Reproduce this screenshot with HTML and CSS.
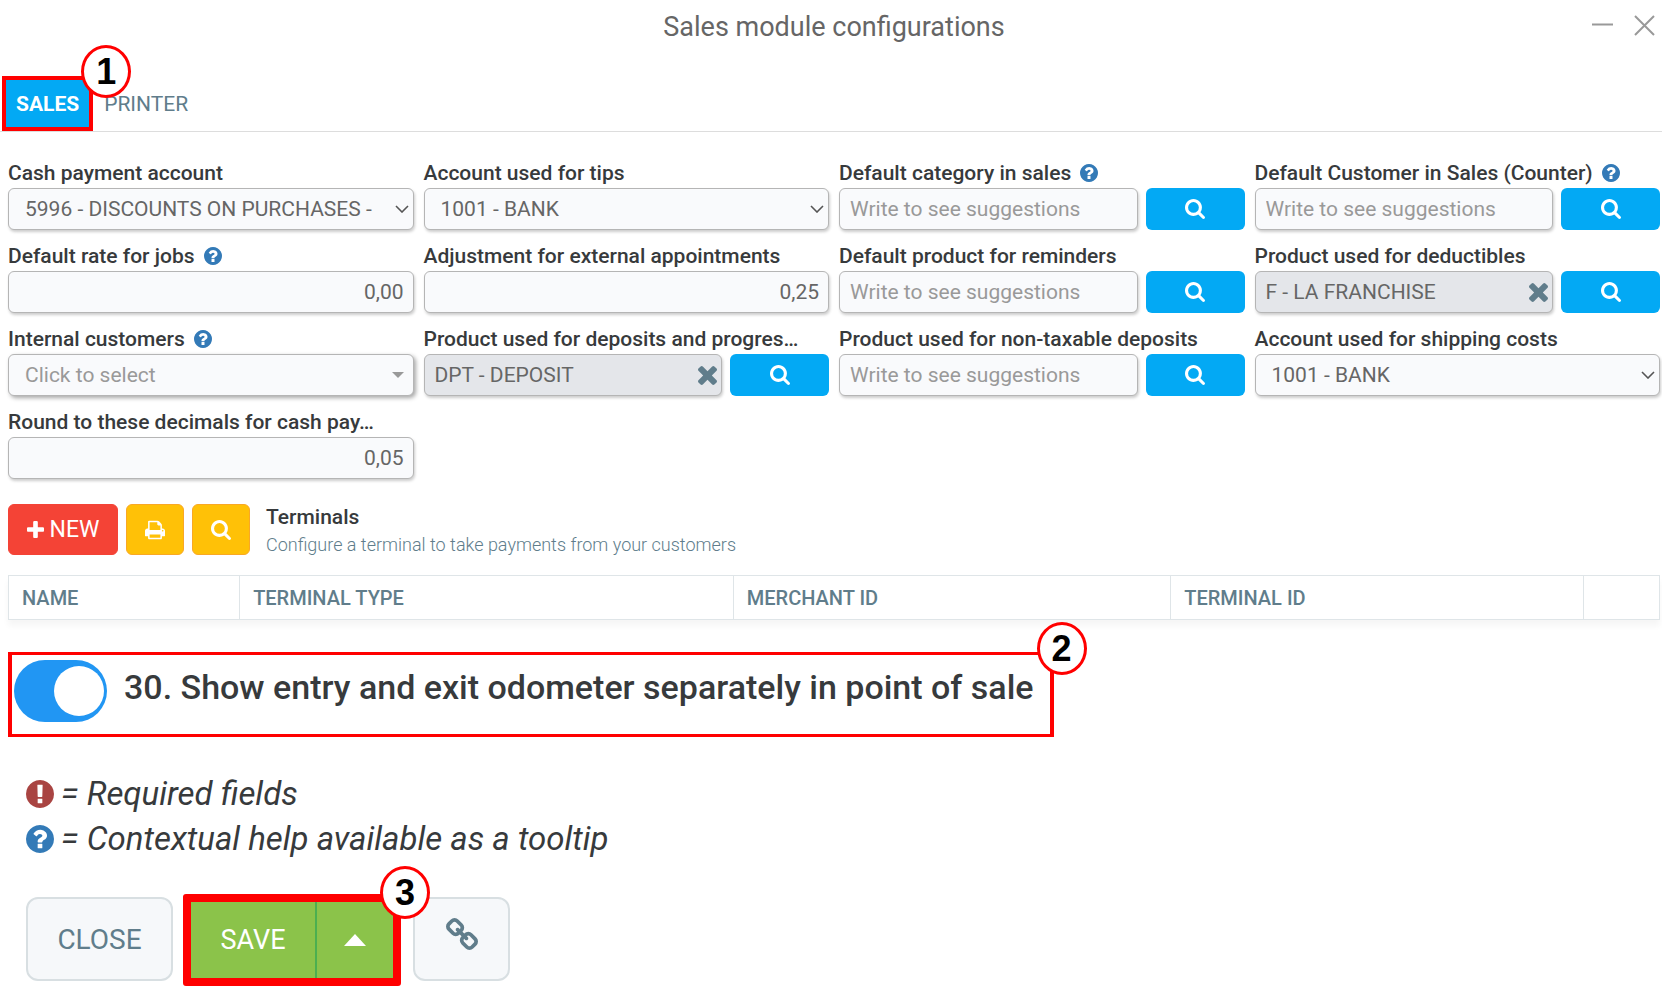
FILE: index.html
```
<!DOCTYPE html>
<html lang="en">
	<head>
		<meta charset="utf-8">
		<title>Sales module configurations</title>
		<link rel="stylesheet" href="styles.css">
	</head>
	<body>
		<!-- icons -->
		<svg class="sprite" aria-hidden="true">
			<symbol id="i-search" viewBox="0 0 1664 1664"><path d="M1152 704q0-185-131.5-316.5t-316.5-131.5-316.5 131.5-131.5 316.5 131.5 316.5 316.5 131.5 316.5-131.5 131.5-316.5zm512 832q0 52-38 90t-90 38q-54 0-90-38l-343-342q-179 124-399 124-143 0-273.5-55.5t-225-150-150-225-55.5-273.5 55.5-273.5 150-225 225-150 273.5-55.5 273.5 55.5 225 150 150 225 55.5 273.5q0 220-124 399l343 343q37 37 37 90z"/></symbol>
			<symbol id="i-help" viewBox="128 128 1536 1536"><path d="M1024 1376v-192q0-14-9-23t-23-9h-192q-14 0-23 9t-9 23v192q0 14 9 23t23 9h192q14 0 23-9t9-23zm256-672q0-88-55.5-163t-138.5-116-170-41q-243 0-371 213-15 24 8 42l132 100q7 6 19 6 16 0 25-12 53-68 86-92 34-24 86-24 48 0 85.5 26t37.5 59q0 38-20 61t-68 45q-63 28-115.5 86.5t-52.5 125.5v36q0 14 9 23t23 9h192q14 0 23-9t9-23q0-19 21.5-49.5t54.5-49.5q32-18 49-28.5t46-35 44.5-48 28-60.5 12.5-81zm384 192q0 209-103 385.5t-279.5 279.5-385.5 103-385.5-103-279.5-279.5-103-385.5 103-385.5 279.5-279.5 385.5-103 385.5 103 279.5 279.5 103 385.5z"/></symbol>
			<symbol id="i-required" viewBox="128 128 1536 1536"><path d="M896 128q209 0 385.5 103t279.5 279.5 103 385.5-103 385.5-279.5 279.5-385.5 103-385.5-103-279.5-279.5-103-385.5 103-385.5 279.5-279.5 385.5-103zm128 1247v-190q0-14-9-23.5t-22-9.5h-192q-13 0-23 10t-10 23v190q0 13 10 23t23 10h192q13 0 22-9.5t9-23.5zm-2-344l18-621q0-12-10-18-10-8-24-8h-220q-14 0-24 8-10 6-10 18l17 621q0 10 10 17.5t24 7.5h185q14 0 23.5-7.5t10.5-17.5z"/></symbol>
			<symbol id="i-times" viewBox="302 366 1188 1188"><path d="M1490 1322q0 40-28 68l-136 136q-28 28-68 28t-68-28l-294-294-294 294q-28 28-68 28t-68-28l-136-136q-28-28-28-68t28-68l294-294-294-294q-28-28-28-68t28-68l136-136q28-28 68-28t68 28l294 294 294-294q28-28 68-28t68 28l136 136q28 28 28 68t-28 68l-294 294 294 294q28 28 28 68z"/></symbol>
			<symbol id="i-plus" viewBox="192 128 1408 1408"><path d="M1600 736v192q0 40-28 68t-68 28h-416v416q0 40-28 68t-68 28h-192q-40 0-68-28t-28-68v-416h-416q-40 0-68-28t-28-68v-192q0-40 28-68t68-28h416v-416q0-40 28-68t68-28h192q40 0 68 28t28 68v416h416q40 0 68 28t28 68z"/></symbol>
			<symbol id="i-print" viewBox="64 64 1664 1664"><path d="M448 1536h896v-256h-896v256zm0-640h896v-384h-160q-40 0-68-28t-28-68v-160h-640v640zm1152 64q0-26-19-45t-45-19-45 19-19 45 19 45 45 19 45-19 19-45zm128 0v416q0 13-9.5 22.5t-22.5 9.5h-224v160q0 40-28 68t-68 28h-960q-40 0-68-28t-28-68v-160h-224q-13 0-22.5-9.5t-9.5-22.5v-416q0-79 56.5-135.5t135.5-56.5h64v-544q0-40 28-68t68-28h672q40 0 88 20t76 48l152 152q28 28 48 76t20 88v256h64q79 0 135.5 56.5t56.5 135.5z"/></symbol>
			<symbol id="i-link" viewBox="80 16 1632 1632"><path d="M1520 1216q0-40-28-68l-208-208q-28-28-68-28-42 0-72 32 3 3 19 18.5t21.5 21.5 15 19 13 25.5 3.5 27.5q0 40-28 68t-68 28q-15 0-27.5-3.5t-25.5-13-19-15-21.5-21.5-18.5-19q-33 31-33 73 0 40 28 68l206 207q27 27 68 27 40 0 68-26l147-146q28-28 28-67zm-703-705q0-40-28-68l-206-207q-28-28-68-28-39 0-68 27l-147 146q-28 28-28 67 0 40 28 68l208 208q27 27 68 27 42 0 72-31-3-3-19-18.5t-21.5-21.5-15-19-13-25.5-3.5-27.5q0-40 28-68t68-28q15 0 27.5 3.5t25.5 13 19 15 21.5 21.5 18.5 19q33-31 33-73zm895 705q0 120-85 203l-147 146q-83 83-203 83-121 0-204-85l-206-207q-83-83-83-203 0-123 88-209l-88-88q-86 88-208 88-120 0-204-84l-208-208q-84-84-84-204t85-203l147-146q83-83 203-83 121 0 204 85l206 207q83 83 83 203 0 123-88 209l88 88q86-88 208-88 120 0 204 84l208 208q84 84 84 204z"/></symbol>
			<symbol id="i-chevron" viewBox="0 0 14 8"><path d="M1 1l6 6 6-6" fill="none" stroke="currentColor" stroke-width="1.6"/></symbol>
		</svg>

		<header class="title-bar">
			<h1>Sales module configurations</h1>
			<div class="window-buttons">
				<button type="button" aria-label="Minimize"><svg width="22" height="22" viewBox="0 0 22 22"><path d="M0 10.5h21" stroke="#999" stroke-width="2"/></svg></button>
				<button type="button" aria-label="Close window"><svg width="22" height="22" viewBox="0 0 22 22"><path d="M1 2l19 19M20 2L1 21" stroke="#999" stroke-width="2"/></svg></button>
			</div>
		</header>

		<nav class="tabs">
			<a class="tab active" href="#sales">SALES<span class="badge">1</span></a>
			<a class="tab" href="#printer">PRINTER</a>
		</nav>

		<form id="sales">
			<div class="fields">
				<div class="field">
					<label for="cash">Cash payment account</label>
					<div class="select">
						<select id="cash"><option>5996 - DISCOUNTS ON PURCHASES -</option></select>
						<svg class="chevron"><use href="#i-chevron"/></svg>
					</div>
				</div>
				<div class="field">
					<label for="tips">Account used for tips</label>
					<div class="select">
						<select id="tips"><option>1001 - BANK</option></select>
						<svg class="chevron"><use href="#i-chevron"/></svg>
					</div>
				</div>
				<div class="field">
					<label for="category">Default category in sales <svg class="help"><use href="#i-help"/></svg></label>
					<div class="lookup">
						<input id="category" type="text" placeholder="Write to see suggestions">
						<button type="button" aria-label="Search category"><svg><use href="#i-search"/></svg></button>
					</div>
				</div>
				<div class="field">
					<label for="customer">Default Customer in Sales (Counter) <svg class="help"><use href="#i-help"/></svg></label>
					<div class="lookup">
						<input id="customer" type="text" placeholder="Write to see suggestions">
						<button type="button" aria-label="Search customer"><svg><use href="#i-search"/></svg></button>
					</div>
				</div>

				<div class="field">
					<label for="rate">Default rate for jobs <svg class="help"><use href="#i-help"/></svg></label>
					<input id="rate" class="number" type="text" value="0,00">
				</div>
				<div class="field">
					<label for="adjustment">Adjustment for external appointments</label>
					<input id="adjustment" class="number" type="text" value="0,25">
				</div>
				<div class="field">
					<label for="reminders">Default product for reminders</label>
					<div class="lookup">
						<input id="reminders" type="text" placeholder="Write to see suggestions">
						<button type="button" aria-label="Search product"><svg><use href="#i-search"/></svg></button>
					</div>
				</div>
				<div class="field">
					<label for="deductibles">Product used for deductibles</label>
					<div class="lookup">
						<div class="chosen">
							<input id="deductibles" type="text" value="F - LA FRANCHISE" readonly>
							<button class="clear" type="button" aria-label="Clear"><svg><use href="#i-times"/></svg></button>
						</div>
						<button type="button" aria-label="Search product"><svg><use href="#i-search"/></svg></button>
					</div>
				</div>

				<div class="field">
					<label for="internal">Internal customers <svg class="help"><use href="#i-help"/></svg></label>
					<div class="select multi">
						<select id="internal"><option>Click to select</option></select>
						<span class="caret"></span>
					</div>
				</div>
				<div class="field">
					<label for="deposits">Product used for deposits and progres…</label>
					<div class="lookup">
						<div class="chosen">
							<input id="deposits" type="text" value="DPT - DEPOSIT" readonly>
							<button class="clear" type="button" aria-label="Clear"><svg><use href="#i-times"/></svg></button>
						</div>
						<button type="button" aria-label="Search product"><svg><use href="#i-search"/></svg></button>
					</div>
				</div>
				<div class="field">
					<label for="nontaxable">Product used for non-taxable deposits</label>
					<div class="lookup">
						<input id="nontaxable" type="text" placeholder="Write to see suggestions">
						<button type="button" aria-label="Search product"><svg><use href="#i-search"/></svg></button>
					</div>
				</div>
				<div class="field">
					<label for="shipping">Account used for shipping costs</label>
					<div class="select">
						<select id="shipping"><option>1001 - BANK</option></select>
						<svg class="chevron"><use href="#i-chevron"/></svg>
					</div>
				</div>

				<div class="field">
					<label for="round">Round to these decimals for cash pay…</label>
					<input id="round" class="number" type="text" value="0,05">
				</div>
			</div>

			<!-- terminals -->
			<div class="terminals-bar">
				<button class="new" type="button"><svg><use href="#i-plus"/></svg>NEW</button>
				<button class="tool" type="button" aria-label="Print"><svg><use href="#i-print"/></svg></button>
				<button class="tool" type="button" aria-label="Search"><svg><use href="#i-search"/></svg></button>
				<div class="terminals-text">
					<h2>Terminals</h2>
					<p>Configure a terminal to take payments from your customers</p>
				</div>
			</div>
			<table class="terminals">
				<colgroup>
					<col class="c-name"><col class="c-type"><col class="c-merchant"><col class="c-id"><col class="c-actions">
				</colgroup>
				<thead>
					<tr>
						<th>NAME</th>
						<th>TERMINAL TYPE</th>
						<th>MERCHANT ID</th>
						<th>TERMINAL ID</th>
						<th></th>
					</tr>
				</thead>
			</table>

			<div class="option">
				<input id="odometer" type="checkbox" checked>
				<label for="odometer">30. Show entry and exit odometer separately in point of sale</label>
				<span class="badge">2</span>
			</div>

			<div class="legend">
				<p><svg class="required"><use href="#i-required"/></svg>= Required fields</p>
				<p><svg><use href="#i-help"/></svg>= Contextual help available as a tooltip</p>
			</div>

			<div class="actions">
				<button class="close" type="button">CLOSE</button>
				<div class="save-group">
					<button class="save" type="submit">SAVE</button>
					<button class="more" type="button" aria-label="More save options"><span class="caret-up"></span></button>
					<span class="badge">3</span>
				</div>
				<button class="link" type="button" aria-label="Copy link"><svg><use href="#i-link"/></svg></button>
			</div>
		</form>
	</body>
</html>
```
FILE: styles.css
```
*{
	margin: 0;
	padding: 0;
	box-sizing: border-box;
}
body{
	font-family: Roboto, "Liberation Sans", sans-serif;
	font-size: 21px;
	color: #373a3c;
	background: #fff;
}
button,input,select{
	font: inherit;
}
button{
	border: none;
	cursor: pointer;
}
svg{
	fill: currentColor;
}
.sprite{
	display: none;
}

/* title */
.title-bar{
	position: relative;
	height: 76px;
	padding: 9px 0 0 6px;
	text-align: center;
}
.title-bar h1{
	font-size: 27px;
	line-height: 36px;
	font-weight: 400;
	color: #666;
}
.window-buttons{
	position: absolute;
	top: 14px;
	right: 6px;
	display: flex;
	gap: 20px;
}
.window-buttons button{
	width: 22px;
	height: 22px;
	background: none;
}
.window-buttons svg{
	display: block;
}

/* tabs */
.tabs{
	display: flex;
	padding-left: 2px;
	border-bottom: 1px solid #ddd;
}
.tab{
	position: relative;
	height: 55px;
	padding: 0 11px;
	line-height: 56px;
	color: #607d8b;
	text-decoration: none;
}
.tab.active{
	border: 4px solid #f00;
	padding: 0 10px;
	line-height: 48px;
	font-weight: 700;
	color: #fff;
	background: #03a9f4;
	z-index: 1;
}
.badge{
	position: absolute;
	width: 50px;
	height: 53px;
	border: 3px solid #f00;
	border-radius: 50%;
	background: #fff;
	color: #000;
	font: 700 36px/48px "Liberation Sans", sans-serif;
	text-align: center;
}
.tab .badge{
	top: -35px;
	right: -42px;
}

/* fields */
.fields{
	display: grid;
	grid-template-columns: repeat(4, 1fr);
	gap: 13px 10px;
	padding: 28px 2px 0 8px;
}
.field{
	min-width: 0;
}
.field label{
	display: flex;
	align-items: center;
	gap: 9px;
	height: 28px;
	padding-bottom: 2px;
	font-weight: 500;
	white-space: nowrap;
}
.help{
	width: 18px;
	height: 18px;
	color: #337ab7;
}
.field input,.field select{
	display: block;
	width: 100%;
	height: 42px;
	padding: 0 9px;
	border: 1px solid #b5b5b5;
	border-radius: 6px;
	background: #f9fafc;
	color: #666;
	box-shadow: 1px 2px 3px rgba(0,0,0,0.2);
	outline: none;
}
.field input::placeholder{
	color: #999;
	opacity: 1;
}
.field .number{
	text-align: right;
}
.select{
	position: relative;
}
.field .select select{
	appearance: none;
	padding: 0 16px;
}
.chevron{
	position: absolute;
	top: 17px;
	right: 5px;
	width: 14px;
	height: 8px;
	color: #555;
	pointer-events: none;
}
.field .multi select{
	color: #999;
	box-shadow: 2px 2px 4px rgba(0,0,0,0.35);
}
.caret{
	position: absolute;
	top: 18px;
	right: 10px;
	border: 6px solid transparent;
	border-top-color: #999;
	border-bottom: none;
	pointer-events: none;
}
.lookup{
	display: flex;
	gap: 8px;
}
.lookup > input,.chosen{
	flex: 1;
	min-width: 0;
}
.lookup > button{
	width: 99px;
	height: 42px;
	border-radius: 6px;
	background: #03a9f4;
	color: #fff;
}
.lookup > button svg{
	display: block;
	width: 20px;
	height: 20px;
	margin: 0 auto;
}
.chosen{
	position: relative;
}
.field .lookup input{
	padding: 0 10px;
}
.field .chosen input{
	background: #e4e6ea;
}
.clear{
	position: absolute;
	top: 12px;
	right: 5px;
	width: 19px;
	height: 19px;
	background: none;
	color: #607d8b;
}
.clear svg{
	display: block;
	width: 19px;
	height: 19px;
}

/* terminals */
.terminals-bar{
	display: flex;
	gap: 8px;
	height: 51px;
	margin: 25px 0 20px 8px;
}
.new,.tool{
	display: flex;
	align-items: center;
	justify-content: center;
	gap: 6px;
	width: 58px;
	height: 51px;
	border: 1px solid #f9a825;
	border-radius: 6px;
	background: #ffc107;
	color: #fff;
}
.new{
	width: 110px;
	border-color: #f44336;
	background: #f44336;
	font-size: 23px;
}
.new svg{
	width: 17px;
	height: 17px;
}
.tool svg{
	width: 20px;
	height: 20px;
}
.terminals-text{
	margin-left: 8px;
}
.terminals-text h2{
	font-size: 21px;
	line-height: 27px;
	font-weight: 500;
}
.terminals-text p{
	font-size: 18px;
	line-height: 28px;
	font-weight: 300;
	color: #607d8b;
}
.terminals{
	width: calc(100% - 10px);
	margin-left: 8px;
	table-layout: fixed;
	border-collapse: collapse;
	box-shadow: 0 6px 6px rgba(0,0,0,0.04);
}
.terminals th{
	height: 44px;
	padding: 0 13px;
	border: 1px solid #dfe5e8;
	font-size: 20px;
	font-weight: 500;
	text-align: left;
	color: #607d8b;
}
.c-name{
	width: 14%;
}
.c-type{
	width: 29.9%;
}
.c-merchant{
	width: 26.5%;
}
.c-id{
	width: 25%;
}

/* toggle option */
.option{
	position: relative;
	display: flex;
	width: fit-content;
	height: 85px;
	margin: 32px 0 0 8px;
	padding: 5px 16px 0 2px;
	border: 4px solid #f00;
	border-width: 3px 4px;
}
.option input{
	appearance: none;
	width: 93px;
	height: 62px;
	border-radius: 31px;
	background: #2196f3;
	cursor: pointer;
}
.option input::before{
	content: "";
	display: block;
	width: 50px;
	height: 50px;
	margin: 6px 0 0 40px;
	border-radius: 50%;
	background: #fff;
}
.option label{
	margin-left: 17px;
	font-size: 34px;
	line-height: 55px;
	font-weight: 500;
}
.option .badge{
	top: -33px;
	right: -37px;
}

.legend{
	margin: 34px 0 0 26px;
	font-size: 33px;
	line-height: 44px;
	font-style: italic;
}
.legend p{
	display: flex;
	align-items: center;
	gap: 7px;
	height: 45px;
}
.legend svg{
	width: 28px;
	height: 28px;
	color: #337ab7;
}
.legend .required{
	color: #a94442;
}

/* bottom buttons */
.actions{
	display: flex;
	align-items: flex-start;
	margin: 33px 0 0 26px;
	font-size: 28px;
}
.close,.link{
	width: 147px;
	height: 84px;
	margin-top: 3px;
	border: 2px solid #d8dfe2;
	border-radius: 12px;
	background: #f6f8fa;
	color: #607d8b;
}
.save-group{
	position: relative;
	display: flex;
	margin: 0 12px 0 10px;
	border: 8px solid #f00;
	border-radius: 3px;
}
.save,.more{
	width: 124px;
	height: 76px;
	background: #8bc34a;
	color: #fff;
	font-size: 27px;
}
.more{
	width: 78px;
	border-left: 2px solid #4caf50;
}
.caret-up{
	display: block;
	width: 0;
	margin: 0 auto;
	border: 11px solid transparent;
	border-top: none;
	border-bottom: 12px solid #fff;
}
.save-group .badge{
	top: -36px;
	right: -37px;
}
.link{
	width: 97px;
}
.link svg{
	display: block;
	width: 32px;
	height: 32px;
	margin: -10px auto 0;
}
```
